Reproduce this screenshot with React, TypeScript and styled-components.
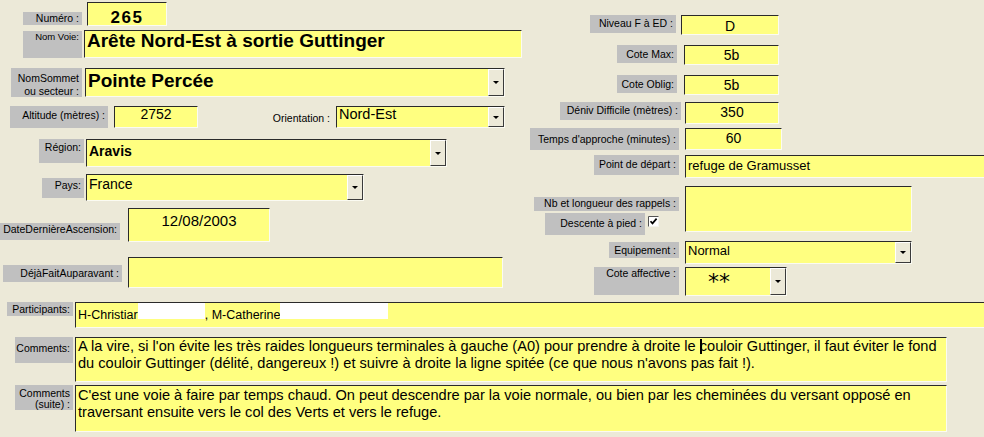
import React from "react";
import styled, { createGlobalStyle } from "styled-components";

const GlobalStyle = createGlobalStyle`
  html, body {
    margin: 0;
    padding: 0;
  }
  body {
    background: #ece9d8;
    font-family: "Liberation Sans", Arial, sans-serif;
    color: #000;
    overflow: hidden;
  }
`;

const Form = styled.div`
  width: 984px;
  height: 437px;
  overflow: hidden;
  background: #ece9d8;
  display: flex;
  flex-direction: column;
`;

const Upper = styled.div`
  display: flex;
  height: 300px;
  flex: none;
`;

const Column = styled.div<{ $w?: number }>`
  display: flex;
  flex-direction: column;
  width: ${(p) => (p.$w ? `${p.$w}px` : "auto")};
  flex: ${(p) => (p.$w ? "none" : "1")};
  min-width: 0;
`;

const Row = styled.div<{ $top: number; $left: number }>`
  display: flex;
  align-items: flex-start;
  margin-top: ${(p) => p.$top}px;
  padding-left: ${(p) => p.$left}px;
`;

type BoxProps = { $w: number; $h: number; $dy?: number; $ml?: number };

const Label = styled.div<BoxProps & { $pt?: number; $fs?: number; $lh?: number }>`
  flex: none;
  box-sizing: border-box;
  width: ${(p) => p.$w}px;
  height: ${(p) => p.$h}px;
  margin-top: ${(p) => p.$dy ?? 0}px;
  margin-left: ${(p) => p.$ml ?? 0}px;
  padding: ${(p) => p.$pt ?? 0}px 3px 0 0;
  background: #c0c0c0;
  font-size: ${(p) => p.$fs ?? 10.5}px;
  line-height: ${(p) => p.$lh ?? 12}px;
  text-align: right;
  white-space: nowrap;
  overflow: hidden;
`;

const PlainLabel = styled(Label)`
  background: transparent;
  padding-right: 0;
`;

const Field = styled.div<BoxProps>`
  flex: none;
  box-sizing: border-box;
  display: flex;
  width: ${(p) => p.$w}px;
  height: ${(p) => p.$h}px;
  margin-top: ${(p) => p.$dy ?? 0}px;
  margin-left: ${(p) => p.$ml ?? 0}px;
  background: #ffff80;
  border: 1px solid;
  border-color: #2a2a2a #fbfbf2 #fbfbf2 #2a2a2a;
  overflow: hidden;
`;

const Value = styled.div<{ $fs: number; $bold?: boolean; $center?: boolean; $mt?: number; $lh?: string }>`
  flex: 1;
  min-width: 0;
  align-self: flex-start;
  margin-top: ${(p) => p.$mt ?? 0}px;
  padding: 0 2px;
  font-size: ${(p) => p.$fs}px;
  font-weight: ${(p) => (p.$bold ? 700 : 400)};
  line-height: ${(p) => p.$lh ?? "1.15"};
  text-align: ${(p) => (p.$center ? "center" : "left")};
  white-space: nowrap;
`;

const Stars = styled(Value)`
  font-family: "DejaVu Sans", sans-serif;
  padding-right: 20px;
`;

const DropButton = styled.div`
  flex: none;
  align-self: stretch;
  box-sizing: border-box;
  width: 16px;
  background: #ece9d8;
  border: 1px solid;
  border-color: #ffffff #3a3a3a #3a3a3a #ffffff;
  display: flex;
  align-items: center;
  justify-content: center;

  &::after {
    content: "";
    border-left: 3px solid transparent;
    border-right: 3px solid transparent;
    border-top: 3px solid #000;
  }
`;

const Redacted = styled.span<{ $w: number }>`
  display: inline-block;
  width: ${(p) => p.$w}px;
  height: 17px;
  margin-top: -6px;
  vertical-align: top;
  background: #ffffff;
`;

const Caret = styled.span`
  display: inline-block;
  width: 2px;
  height: 15px;
  margin-right: -2px;
  vertical-align: -3px;
  background: #000;
`;

const LabelStack = styled.div<{ $w: number }>`
  flex: none;
  width: ${(p) => p.$w}px;
  display: flex;
  flex-direction: column;
`;

const InlineRow = styled.div<{ $top: number }>`
  display: flex;
  align-items: flex-start;
  margin-top: ${(p) => p.$top}px;
`;

const CheckBox = styled.svg<{ $ml: number; $dy: number }>`
  flex: none;
  margin-left: ${(p) => p.$ml}px;
  margin-top: ${(p) => p.$dy}px;
`;

const Combo: React.FC<BoxProps & { children?: React.ReactNode }> = ({ children, ...box }) => (
  <Field {...box}>
    {children}
    <DropButton />
  </Field>
);

export default function App() {
  return (
    <>
      <GlobalStyle />
      <Form>
        <Upper>
          <Column $w={525}>
            <Row $top={2} $left={23}>
              <Label $w={59} $h={13} $dy={10}>Numéro :</Label>
              <Field $w={80} $h={24} $ml={5}>
                <Value $fs={17} $bold $center $mt={5} style={{ letterSpacing: "1.5px" }}>265</Value>
              </Field>
            </Row>
            <Row $top={4} $left={23}>
              <Label $w={59} $h={27} $dy={1} $fs={9.5}>Nom Voie:</Label>
              <Field $w={438} $h={28} $ml={2}>
                <Value $fs={19} $bold $mt={-1}>Arête Nord-Est à sortie Guttinger</Value>
              </Field>
            </Row>
            <Row $top={10} $left={11}>
              <Label $w={71} $h={29} $pt={4} $lh={13}>
                NomSommet
                <br />
                ou secteur :
              </Label>
              <Combo $w={420} $h={29} $ml={3}>
                <Value $fs={19} $bold $mt={1}>Pointe Percée</Value>
              </Combo>
            </Row>
            <Row $top={9} $left={10}>
              <Label $w={98} $h={22} $pt={3}>Altitude (mètres) :</Label>
              <Field $w={84} $h={22} $ml={6}>
                <Value $fs={14} $center $mt={-1}>2752</Value>
              </Field>
              <PlainLabel $w={70} $h={14} $dy={6} $ml={62}>Orientation :</PlainLabel>
              <Combo $w={169} $h={22} $ml={6}>
                <Value $fs={14.5} $mt={-1}>Nord-Est</Value>
              </Combo>
            </Row>
            <Row $top={11} $left={39}>
              <Label $w={45} $h={24} $pt={2}>Région:</Label>
              <Combo $w={361} $h={28} $ml={2}>
                <Value $fs={14} $bold $mt={3}>Aravis</Value>
              </Combo>
            </Row>
            <Row $top={7} $left={42}>
              <Label $w={42} $h={20} $dy={4} $pt={1}>Pays:</Label>
              <Combo $w={278} $h={27} $ml={2}>
                <Value $fs={14} $mt={1}>France</Value>
              </Combo>
            </Row>
            <Row $top={7} $left={0}>
              <Label $w={120} $h={17} $dy={15}>DateDernièreAscension:</Label>
              <Field $w={142} $h={34} $ml={8}>
                <Value $fs={15} $center $mt={3}>12/08/2003</Value>
              </Field>
            </Row>
            <Row $top={15} $left={3}>
              <Label $w={119} $h={17} $dy={8} $pt={2}>DéjàFaitAuparavant :</Label>
              <Field $w={375} $h={31} $ml={6} />
            </Row>
          </Column>

          <Column>
            <Row $top={15} $left={65}>
              <Label $w={86} $h={18} $pt={2}>Niveau F à ED :</Label>
              <Field $w={98} $h={20} $ml={5}>
                <Value $fs={14} $center $mt={2}>D</Value>
              </Field>
            </Row>
            <Row $top={10} $left={92}>
              <Label $w={60} $h={18} $pt={3}>Cote Max:</Label>
              <Field $w={95} $h={20} $ml={7}>
                <Value $fs={14} $center $mt={1}>5b</Value>
              </Field>
            </Row>
            <Row $top={10} $left={92}>
              <Label $w={60} $h={18} $pt={3}>Cote Oblig:</Label>
              <Field $w={95} $h={20} $ml={7}>
                <Value $fs={14} $center $mt={1}>5b</Value>
              </Field>
            </Row>
            <Row $top={7} $left={35}>
              <Label $w={121} $h={18} $pt={2}>Déniv Difficile (mètres) :</Label>
              <Field $w={94} $h={22} $ml={4}>
                <Value $fs={14} $center $mt={1}>350</Value>
              </Field>
            </Row>
            <Row $top={4} $left={5}>
              <Label $w={149} $h={22} $pt={5}>Temps d'approche (minutes) :</Label>
              <Field $w={97} $h={22} $ml={6}>
                <Value $fs={14} $center $mt={1}>60</Value>
              </Field>
            </Row>
            <Row $top={5} $left={69}>
              <Label $w={85} $h={20} $pt={3}>Point de départ :</Label>
              <Field $w={310} $h={23} $ml={6}>
                <Value $fs={13} $mt={3}>refuge de Gramusset</Value>
              </Field>
            </Row>
            <Row $top={8} $left={9}>
              <LabelStack $w={151}>
                <Label $w={145} $h={14} $dy={11}>Nb et longueur des rappels :</Label>
                <InlineRow $top={2}>
                  <Label $w={100} $h={22} $ml={11} $pt={4}>Descente à pied :</Label>
                  <CheckBox $ml={3} $dy={3} width="11" height="11" viewBox="0 0 11 11">
                    <rect x="0.5" y="0.5" width="10" height="10" fill="#ffffff" stroke="#f4f4ee" />
                    <path d="M0.5 10.5 V0.5 H10.5" fill="none" stroke="#555" />
                    <path d="M2.5 5.2 L4.5 7.4 L8.6 2.6" fill="none" stroke="#000" strokeWidth="1.7" />
                  </CheckBox>
                </InlineRow>
              </LabelStack>
              <Field $w={227} $h={46} />
            </Row>
            <Row $top={6} $left={84}>
              <Label $w={70} $h={16} $dy={1} $pt={2}>Equipement :</Label>
              <Combo $w={227} $h={23} $ml={6}>
                <Value $fs={13} $mt={2}>Normal</Value>
              </Combo>
            </Row>
            <Row $top={3} $left={69}>
              <Label $w={85} $h={28}>Cote affective :</Label>
              <Combo $w={102} $h={29} $ml={6}>
                <Stars $fs={22} $center $mt={1}>**</Stars>
              </Combo>
            </Row>
          </Column>
        </Upper>

        <Row $top={2} $left={7}>
          <Label $w={66} $h={14} $pt={1}>Participants:</Label>
          <Field $w={920} $h={26} $ml={2}>
            <Value $fs={12.5} $mt={5}>
              H-Christiar<Redacted $w={67} />, M-Catherine<Redacted $w={108} />
            </Value>
          </Field>
        </Row>
        <Row $top={9} $left={15}>
          <Label $w={58} $h={26} $pt={5}>Comments:</Label>
          <Field $w={872} $h={45} $ml={2}>
            <Value $fs={14.6} $lh="17px">
              A la vire, si l'on évite les très raides longueurs terminales à gauche (A0) pour prendre à droite le <Caret />couloir Guttinger, il faut éviter le fond
              <br />
              du couloir Guttinger (délité, dangereux !) et suivre à droite la ligne spitée (ce que nous n'avons pas fait !).
            </Value>
          </Field>
        </Row>
        <Row $top={3} $left={15}>
          <Label $w={58} $h={25} $pt={3} $lh={10.5}>
            Comments
            <br />
            (suite) :
          </Label>
          <Field $w={872} $h={47} $ml={2}>
            <Value $fs={14.6} $lh="17px" $mt={1}>
              C'est une voie à faire par temps chaud. On peut descendre par la voie normale, ou bien par les cheminées du versant opposé en
              <br />
              traversant ensuite vers le col des Verts et vers le refuge.
            </Value>
          </Field>
        </Row>
      </Form>
    </>
  );
}
